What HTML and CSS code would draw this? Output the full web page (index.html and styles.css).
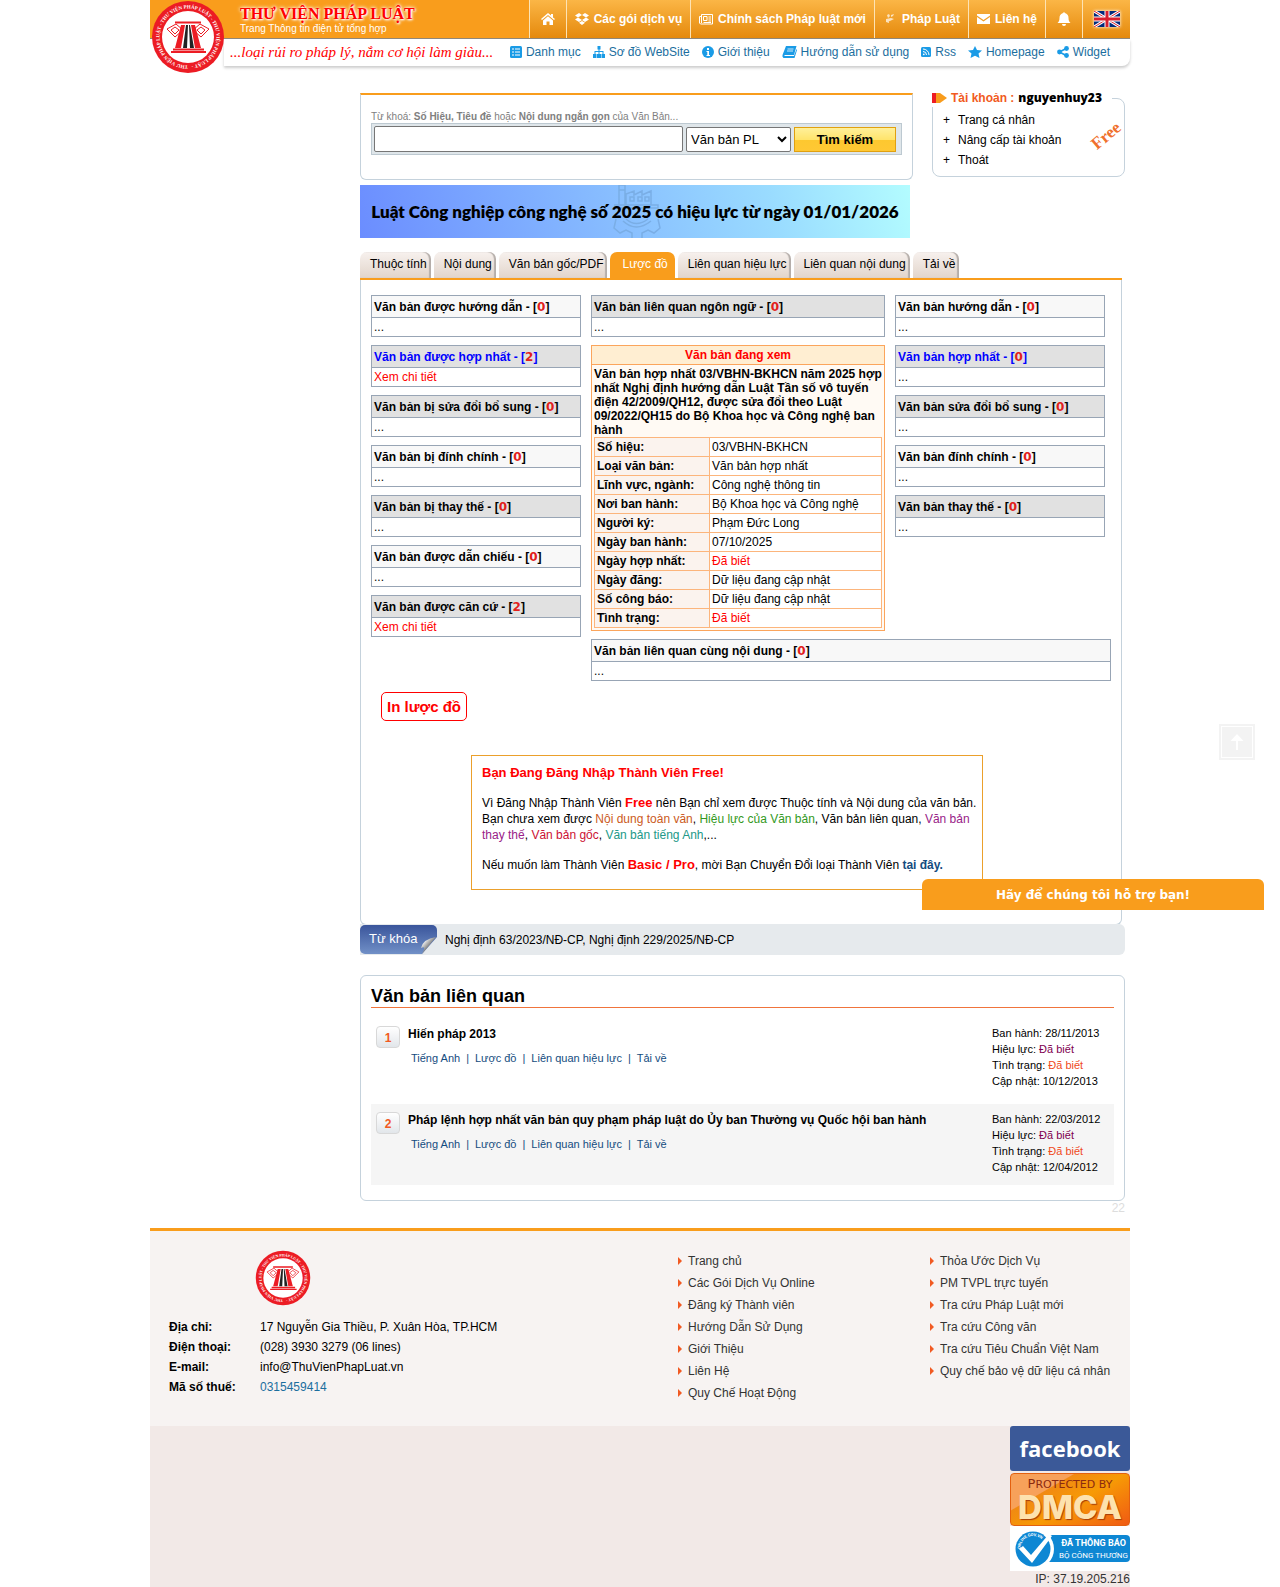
FILE: index.html
```html
<!DOCTYPE html>
<html lang="vi">
<head>
<meta charset="utf-8">
<meta name="viewport" content="width=device-width, initial-scale=1">
<title>Lược đồ - Thư Viện Pháp Luật</title>
<link rel="stylesheet" href="styles.css">
</head>
<body>
<svg class="sprite" aria-hidden="true">
  <defs>
    <path id="ring" d="M37 65.5A28.500 28.500 0 1 1 37.100 65.500"/>
    <symbol id="logo" viewBox="0 0 74 74">
      <circle cx="37" cy="37" r="36" fill="#ec1c24"/>
      <circle cx="37" cy="37" r="26" fill="#fff"/>
      <text class="ring-text"><textPath href="#ring">THƯ VIỆN PHÁP LUẬT - THƯ VIỆN PHÁP LUẬT - THƯ VIỆN PHÁP LUẬT -</textPath></text>
      <path d="M20 52h35M22 49.500h31M24 22.500h26" stroke="#ec1c24" stroke-width="1.800"/>
      <path d="M30 25h4l-4 23h-6zM40 25h4l6 23h-6z" fill="#ec1c24"/>
      <path d="M35 25h2l-1 23h-4zM38 25h1l4 23h-4z" fill="#222"/>
      <path d="M25 24l7 6-8 7-8-8zM49 24l-7 6 8 7 8-8zM24 27l4 3-4 4-4-4zM50 27l-4 3 4 4 4-4z" fill="none" stroke="#ec1c24"/>
    </symbol>
  </defs>
</svg>

<div class="page">
  <header class="header">
    <a class="logo" href="#" aria-label="Thư Viện Pháp Luật"><svg width="74" height="74"><use href="#logo"/></svg></a>
    <div class="topbar">
      <div class="brand">
        <strong class="brand-name">THƯ VIỆN PHÁP LUẬT</strong>
        <span class="brand-sub">Trang Thông tin điện tử tổng hợp</span>
      </div>
      <nav class="topnav">
        <a class="n-icon" href="#" aria-label="Trang chủ"><svg width="14" height="12" viewBox="0 0 14 12"><path d="M7 0l3 2.600V1h2v3.400L14 6l-1 1-6-5-6 5-1-1zM7 3.200l5 4.200V12H8.500V8.500h-3V12H2V7.400z"/></svg></a>
        <a class="n-services" href="#"><svg width="14" height="12" viewBox="0 0 14 12"><path d="M4 0l3 2-4 2.500L0 2.500zM10 0L7 2l4 2.500 3-2zM0 6.500l3-2L7 7 4 9zM14 6.500l-3-2L7 7l3 2zM4 9.800L7 8l3 1.800L7 12z"/></svg>Các gói dịch vụ</a>
        <a class="n-policy" href="#"><svg width="14" height="11" viewBox="0 0 14 11"><path d="M2.500.5h11v9.500h-12L.5 9V2.500h2zM2.500 2v7M4.500 2.500h3.500v4H4.500zM9.500 3H12M9.500 5H12M9.500 7H12M4.500 8.500H12" fill="none" stroke="#fff"/></svg>Chính sách Pháp luật mới</a>
        <a class="n-law" href="#"><svg width="14" height="12" viewBox="0 0 14 12"><path opacity=".7" d="M4 2l2-1 1 2-2 2zM8 2l3-1-1 2-2 1zM3 6l5-1 3 1-4 2-4 1zM3 9l3-1v2z"/></svg>Pháp Luật</a>
        <a class="n-contact" href="#"><svg width="13" height="10" viewBox="0 0 13 10"><path d="M0 0h13v1.500L6.500 6 0 1.500zM0 3l6.500 4.500L13 3v7H0z"/></svg>Liên hệ</a>
        <a class="n-icon" href="#" aria-label="Thông báo"><svg width="14" height="14" viewBox="0 0 14 14"><path d="M7 0l1 1c3 1 3.500 3 3.500 5 0 3 1 4 2 5H.5c1-1 2-2 2-5 0-2 .5-4 3.500-5zM5 12h4a2 2 0 0 1-4 0"/></svg></a>
        <a class="n-lang" href="#" aria-label="English"><svg width="26" height="16" viewBox="0 0 26 16"><path fill="#012a7c" d="M0 0h26v16H0z"/><path d="M0 0l26 16M26 0L0 16" stroke="#fff" stroke-width="3"/><path d="M0 0l26 16M26 0L0 16" stroke="#d8202e"/><path d="M13 0v16M0 8h26" stroke="#fff" stroke-width="5"/><path d="M13 0v16M0 8h26" stroke="#d8202e" stroke-width="3"/></svg></a>
      </nav>
    </div>
    <div class="subbar">
      <em class="slogan">...loại rủi ro pháp lý, nắm cơ hội làm giàu...</em>
      <nav class="subnav">
        <a href="#"><svg width="12" height="12" viewBox="0 0 12 12"><rect width="12" height="12" rx="1.500"/><path d="M2 3h2M5 3h5M2 6h2M5 6h5M2 9h2M5 9h5" stroke="#fff"/></svg>Danh mục</a>
        <a href="#"><svg width="12" height="12" viewBox="0 0 12 12"><path d="M4.500 0h3v3.500h-1V5h4v3H12v4H8.500V8h1V6h-3v2H8v4H4V8h1.500V6h-3v2h1v4H0V8h1.500V5h4V3.500h-1z"/></svg>Sơ đồ WebSite</a>
        <a href="#"><svg width="12" height="12" viewBox="0 0 12 12"><circle cx="6" cy="6" r="6"/><path d="M5 2h2v2H5zM4.500 5H7v4h1v1H4.500V9h.8V6h-.8z" fill="#fff"/></svg>Giới thiệu</a>
        <a href="#"><svg width="15" height="12" viewBox="0 0 15 12"><path d="M4 0h10.500L12 9H2.500v1H12l2.500-7 .5 1-2.500 8H1.500Q0 11 .5 9z"/><path d="M5.500 3h6M5 5h6" stroke="#fff" stroke-width=".8"/></svg>Hướng dẫn sử dụng</a>
        <a href="#"><svg width="10" height="10" viewBox="0 0 10 10"><rect width="10" height="10" rx="1.500"/><path d="M2 4.500a3.500 3.500 0 0 1 3.500 3.500M2 2a6 6 0 0 1 6 6" fill="none" stroke="#fff"/><circle cx="2.800" cy="7.300" r=".9" fill="#fff"/></svg>Rss</a>
        <a href="#"><svg width="14" height="12" viewBox="0 0 14 12"><path d="M7 0l2 4 5 .5-3.500 3 1 4.500L7 9.700 2.500 12l1-4.500L0 4.500 5 4z"/></svg>Homepage</a>
        <a href="#"><svg width="12" height="12" viewBox="0 0 12 12"><path d="M9.500 2.300L2.500 6l7 3.700" fill="none" stroke="#1a9be6" stroke-width="1.600"/><circle cx="9.500" cy="2.500" r="2.400"/><circle cx="2.500" cy="6" r="2.400"/><circle cx="9.500" cy="9.500" r="2.400"/></svg>Widget</a>
      </nav>
    </div>
  </header>

  <main class="content">
    <div class="toprow">
      <form class="search">
        <label class="hint" for="q">Từ khoá: <b>Số Hiệu, Tiêu đề</b> hoặc <b>Nội dung ngắn gọn</b> của Văn Bản...</label>
        <div class="searchbar">
          <input id="q" type="text">
          <select aria-label="Loại tìm kiếm"><option>Văn bản PL</option></select>
          <button type="button">Tìm kiếm</button>
        </div>
      </form>
      <section class="account">
        <h2><svg width="15" height="10" viewBox="0 0 15 10"><path fill="#ed1c24" d="M0 0h4v10H0z"/><path fill="#f89c1c" d="M4 0h4l7 5-7 5H4z"/></svg>Tài khoản : <b>nguyenhuy23</b></h2>
        <ul>
          <li><a href="#">Trang cá nhân</a></li>
          <li><a href="#">Nâng cấp tài khoản</a></li>
          <li><a href="#">Thoát</a></li>
        </ul>
        <span class="free">Free</span>
      </section>
    </div>

    <a class="banner" href="#">
      <svg class="gear" width="48" height="53" viewBox="0 0 48 53"><path d="M6 20V0h6v20M6 5h6M13 20V9l8-3v4l8-4v4l9-4v14M17 12h4v4h-4zM25 12h4v4h-4zM32 12h4v4h-4zM1 20h44v3H1M13 34q10 9 22 0M10 36q13 12 28 0M3 34l-2 9 6 5 6-3 6 3v5M45 34l2 9-6 5-6-3-6 3v5"/></svg>
      <span>Luật Công nghiệp công nghệ số 2025 có hiệu lực từ ngày 01/01/2026</span>
    </a>

    <nav class="tabs">
      <a href="#">Thuộc tính</a><a href="#">Nội dung</a><a href="#">Văn bản gốc/PDF</a><a class="active" href="#">Lược đồ</a><a href="#">Liên quan hiệu lực</a><a href="#">Liên quan nội dung</a><a href="#">Tải về</a>
    </nav>

    <section class="panel">
      <div class="diagram">
        <div class="col side">
          <div class="box"><h3>Văn bản được hướng dẫn - [<i>0</i>]</h3><p>...</p></div>
          <div class="box dark blue"><h3>Văn bản được hợp nhất - [<i>2</i>]</h3><p><a href="#">Xem chi tiết</a></p></div>
          <div class="box dark"><h3>Văn bản bị sửa đổi bổ sung - [<i>0</i>]</h3><p>...</p></div>
          <div class="box"><h3>Văn bản bị đính chính - [<i>0</i>]</h3><p>...</p></div>
          <div class="box dark"><h3>Văn bản bị thay thế - [<i>0</i>]</h3><p>...</p></div>
          <div class="box"><h3>Văn bản được dẫn chiếu - [<i>0</i>]</h3><p>...</p></div>
          <div class="box dark"><h3>Văn bản được căn cứ - [<i>2</i>]</h3><p><a href="#">Xem chi tiết</a></p></div>
        </div>
        <div class="wide">
          <div class="pair">
            <div class="col middle">
              <div class="box dark"><h3>Văn bản liên quan ngôn ngữ - [<i>0</i>]</h3><p>...</p></div>
              <div class="current">
                <h3>Văn bản đang xem</h3>
                <p>Văn bản hợp nhất 03/VBHN-BKHCN năm 2025 hợp nhất Nghị định hướng dẫn Luật Tần số vô tuyến điện 42/2009/QH12, được sửa đổi theo Luật 09/2022/QH15 do Bộ Khoa học và Công nghệ ban hành</p>
                <table>
                  <tr><th scope="row">Số hiệu:</th><td>03/VBHN-BKHCN</td></tr>
                  <tr><th scope="row">Loại văn bản:</th><td>Văn bản hợp nhất</td></tr>
                  <tr><th scope="row">Lĩnh vực, ngành:</th><td>Công nghệ thông tin</td></tr>
                  <tr><th scope="row">Nơi ban hành:</th><td>Bộ Khoa học và Công nghệ</td></tr>
                  <tr><th scope="row">Người ký:</th><td>Phạm Đức Long</td></tr>
                  <tr><th scope="row">Ngày ban hành:</th><td>07/10/2025</td></tr>
                  <tr><th scope="row">Ngày hợp nhất:</th><td class="red">Đã biết</td></tr>
                  <tr><th scope="row">Ngày đăng:</th><td>Dữ liệu đang cập nhật</td></tr>
                  <tr><th scope="row">Số công báo:</th><td>Dữ liệu đang cập nhật</td></tr>
                  <tr><th scope="row">Tình trạng:</th><td class="red">Đã biết</td></tr>
                </table>
              </div>
            </div>
            <div class="col side">
              <div class="box"><h3>Văn bản hướng dẫn - [<i>0</i>]</h3><p>...</p></div>
              <div class="box dark blue"><h3>Văn bản hợp nhất - [<i>0</i>]</h3><p>...</p></div>
              <div class="box dark"><h3>Văn bản sửa đổi bổ sung - [<i>0</i>]</h3><p>...</p></div>
              <div class="box"><h3>Văn bản đính chính - [<i>0</i>]</h3><p>...</p></div>
              <div class="box dark"><h3>Văn bản thay thế - [<i>0</i>]</h3><p>...</p></div>
            </div>
          </div>
          <div class="box"><h3>Văn bản liên quan cùng nội dung - [<i>0</i>]</h3><p>...</p></div>
        </div>
      </div>
      <button class="print" type="button">In lược đồ</button>
      <div class="notice">
        <h3>Bạn Đang Đăng Nhập Thành Viên Free!</h3>
        <p>Vì Đăng Nhập Thành Viên <b>Free</b> nên Bạn chỉ xem được Thuộc tính và Nội dung của văn bản. Bạn chưa xem được <span class="c1">Nội dung toàn văn</span>, <span class="c2">Hiệu lực của Văn bản</span>, Văn bản liên quan, <span class="c3">Văn bản thay thế</span>, <span class="c4">Văn bản gốc</span>, <span class="c5">Văn bản tiếng Anh</span>,...</p>
        <p>Nếu muốn làm Thành Viên <b>Basic / Pro</b>, mời Bạn Chuyển Đổi loại Thành Viên <a href="#">tại đây.</a></p>
      </div>
    </section>

    <div class="keywords">
      <span class="key-label">Từ khóa<svg width="17" height="17" viewBox="0 0 17 17"><defs><linearGradient id="fold" x2="1" y2="1"><stop offset=".2" stop-color="#fff"/><stop offset=".6" stop-color="#666"/></linearGradient></defs><path fill="#e6eaed" d="M17 0v17H2z"/><path fill="url(#fold)" d="M16 0Q3 2 1 11q6-3 1 6z"/></svg></span>
      <span><a href="#">Nghị định 63/2023/NĐ-CP</a>, <a href="#">Nghị định 229/2025/NĐ-CP</a></span>
    </div>

    <section class="related">
      <h2>Văn bản liên quan</h2>
      <article>
        <span class="num">1</span>
        <div class="doc">
          <h3><a href="#">Hiến pháp 2013</a></h3>
          <p><a href="#">Tiếng Anh</a><span>|</span><a href="#">Lược đồ</a><span>|</span><a href="#">Liên quan hiệu lực</a><span>|</span><a href="#">Tải về</a></p>
        </div>
        <div class="meta"><div>Ban hành: 28/11/2013</div><div>Hiệu lực: <span class="valid">Đã biết</span></div><div>Tình trạng: <span class="state">Đã biết</span></div><div>Cập nhật: 10/12/2013</div></div>
      </article>
      <article>
        <span class="num">2</span>
        <div class="doc">
          <h3><a href="#">Pháp lệnh hợp nhất văn bản quy phạm pháp luật do Ủy ban Thường vụ Quốc hội ban hành</a></h3>
          <p><a href="#">Tiếng Anh</a><span>|</span><a href="#">Lược đồ</a><span>|</span><a href="#">Liên quan hiệu lực</a><span>|</span><a href="#">Tải về</a></p>
        </div>
        <div class="meta"><div>Ban hành: 22/03/2012</div><div>Hiệu lực: <span class="valid">Đã biết</span></div><div>Tình trạng: <span class="state">Đã biết</span></div><div>Cập nhật: 12/04/2012</div></div>
      </article>
    </section>
    <div class="counter">22</div>
  </main>

  <footer class="footer">
    <div class="foot-main">
      <div class="contact">
        <svg width="56" height="56"><use href="#logo"/></svg>
        <dl>
          <dt>Địa chỉ:</dt><dd>17 Nguyễn Gia Thiều, P. Xuân Hòa, TP.HCM</dd>
          <dt>Điện thoại:</dt><dd>(028) 3930 3279 (06 lines)</dd>
          <dt>E-mail:</dt><dd>info@ThuVienPhapLuat.vn</dd>
          <dt>Mã số thuế:</dt><dd><a href="#">0315459414</a></dd>
        </dl>
      </div>
      <ul>
        <li><a href="#">Trang chủ</a></li><li><a href="#">Các Gói Dịch Vụ Online</a></li><li><a href="#">Đăng ký Thành viên</a></li><li><a href="#">Hướng Dẫn Sử Dụng</a></li><li><a href="#">Giới Thiệu</a></li><li><a href="#">Liên Hệ</a></li><li><a href="#">Quy Chế Hoạt Động</a></li>
      </ul>
      <ul>
        <li><a href="#">Thỏa Ước Dịch Vụ</a></li><li><a href="#">PM TVPL trực tuyến</a></li><li><a href="#">Tra cứu Pháp Luật mới</a></li><li><a href="#">Tra cứu Công văn</a></li><li><a href="#">Tra cứu Tiêu Chuẩn Việt Nam</a></li><li><a href="#">Quy chế bảo vệ dữ liệu cá nhân</a></li>
      </ul>
    </div>
    <div class="badges">
      <a class="facebook" href="#">facebook</a>
      <a class="dmca" href="#"><small>P<span>ROTECTED BY</span></small><strong>DMCA</strong></a>
      <a class="bct" href="#">
        <svg width="42" height="40" viewBox="0 0 42 40"><circle cx="19" cy="20" r="20" fill="#fff"/><circle cx="18" cy="20" r="17.500" fill="#0e87d3"/><path id="arc" d="M5.500 20A12.500 12.500 0 0 1 30 16" fill="none"/><text class="arc-text"><textPath href="#arc">ONLINE.GOV.VN</textPath></text><path d="M4 20l4-3 8 9L34 5l3 2-20 27z" fill="#fff"/></svg>
        <span><b>ĐÃ THÔNG BÁO</b>BỘ CÔNG THƯƠNG</span>
      </a>
      <span>IP: 37.19.205.216</span>
    </div>
  </footer>
</div>

<button class="to-top" type="button" aria-label="Lên đầu trang"><svg width="14" height="16" viewBox="0 0 14 16"><path fill="#fff" d="M7 0l6.500 7H8v9H6V7H.5z"/></svg></button>
<button class="support" type="button">Hãy để chúng tôi hỗ trợ bạn!</button>
</body>
</html>
```

FILE: styles.css
```css
* { box-sizing: border-box; }
body { margin: 0; position: relative; background: #fff; color: #000; font: 12px/16px "Liberation Sans", Arial, sans-serif; }
a { color: inherit; text-decoration: none; }
h2, h3, p, ul, dl, dd { margin: 0; padding: 0; }
h3 { font-size: 12px; }
ul { list-style: none; }
button, input, select { font-family: inherit; color: #000; }
.sprite { position: absolute; width: 0; height: 0; }
.ring-text { font: bold 5px "Liberation Serif", serif; fill: #fff; }
.page { max-width: 980px; margin: 0 auto; }

/* Header */
.header { position: relative; }
.logo { position: absolute; left: 1px; top: 0; z-index: 1; }
.logo svg { display: block; }
.topbar { display: flex; height: 39px; background: #f99d1c; border-bottom: 1px solid #8f8578; }
.brand { flex: 1; display: flex; flex-direction: column; padding: 5px 0 0 90px; }
.brand-name { font: bold 16px/18px "Liberation Serif", serif; color: #f00; text-shadow: 0 0 3px #fff, 0 0 4px #fff, 1px 1px 2px #fff; }
.brand-sub { font-size: 10px; line-height: 12px; color: #fff; }
.topnav { display: flex; color: #fff; fill: #fff; font-weight: bold; }
.topnav a { display: flex; align-items: center; justify-content: center; gap: 5px; border-left: 1px solid #fde3b4; background: linear-gradient(#fbb646, #e5890c); }
.n-icon { width: 37px; }
.n-services { width: 124px; }
.n-policy { width: 184px; }
.n-law { width: 94px; }
.n-contact { width: 77px; }
.n-lang { width: 48px; }
.n-lang svg { box-shadow: 0 0 3px #fff; }
.subbar { display: flex; align-items: center; justify-content: space-between; height: 27px; margin-left: 74px; padding: 0 20px 2px 6px; border-radius: 0 0 8px 0; box-shadow: 0 2px 3px #ccc; }
.slogan { font: italic 15px/20px "Liberation Serif", serif; color: #f00; }
.subnav { display: flex; gap: 12px; color: #1b6e9e; fill: #1a9be6; }
.subnav a { display: flex; align-items: center; gap: 4px; }

/* Search and account */
.content { padding: 27px 5px 0 210px; }
.toprow { display: flex; align-items: flex-start; justify-content: space-between; }
.search { width: 553px; height: 87px; padding: 15px 10px 0; border: 1px solid #c5d2dc; border-top: 2px solid #f99d1c; border-radius: 0 0 6px 6px; }
.hint { display: block; font-size: 10px; line-height: 13px; color: #808080; }
.searchbar { display: flex; align-items: center; gap: 3px; height: 32px; padding: 0 5px 0 2px; border: 1px solid #bdc9d1; background: #dfe6ea; }
.searchbar input { flex: 1; min-width: 0; height: 26px; border: 1px solid #767676; border-radius: 2px; background: #fff; }
.searchbar select { width: 105px; height: 25px; padding: 0; border: 1px solid #767676; border-radius: 2px; background: #fff; font-size: 13px; }
.searchbar button { width: 102px; height: 25px; padding: 0; border: 1px solid #e0a010; background: linear-gradient(#fff09a, #ffe46c 50%, #fdc82f 51%, #ffc834); font-size: 13px; font-weight: bold; }
.account { position: relative; width: 193px; height: 79px; margin-top: 5px; border: 1px solid #c5d2dc; border-radius: 8px; }
.account h2 { display: flex; align-items: center; gap: 4px; width: 180px; height: 18px; margin: -10px 0 0 -1px; background: #fff; color: #f15a22; font-size: 12px; }
.account h2 b { color: #000; font: 800 12px/16px "Open Sans", sans-serif; }
.account ul { padding-left: 10px; line-height: 20px; margin-top: 3px; }
.account li::before { content: "+"; display: inline-block; width: 15px; }
.free { position: absolute; right: 1px; top: 26px; transform: rotate(-40deg); color: #f0702c; font: bold 17px/22px "Liberation Serif", serif; }

/* Banner */
.banner { position: relative; display: flex; align-items: center; justify-content: center; width: 550px; height: 53px; margin-top: 5px; background: linear-gradient(75deg, #6b8dff, #9adcff 75%, #b3fcff); font: 800 17px/20px Lato, sans-serif; }
.banner span { position: relative; white-space: nowrap; }
.gear { position: absolute; left: 253px; top: 0; fill: none; stroke: #7aaee6; stroke-width: 1.5; }

/* Tabs and diagram */
.tabs { display: flex; gap: 3px; margin: 14px 3px 0 0; height: 28px; border-bottom: 2px solid #f99d1c; line-height: 24px; }
.tabs a { padding: 0 4px 0 10px; border-radius: 7px 7px 0 0; background: linear-gradient(#f7f1ee, #e2d5cb); box-shadow: inset -2px 0 1px #b5aeaa; white-space: nowrap; }
.tabs .active { padding: 0 7px 0 12px; background: #f99d1c; box-shadow: none; color: #fff; }
.panel { margin-right: 3px; padding: 15px 10px 34px; border: 1px solid #c5d2dc; border-top: 0; border-radius: 0 0 6px 6px; }
.diagram { display: flex; gap: 10px; }
.col { display: flex; flex-direction: column; gap: 8px; }
.side { width: 210px; }
.middle { width: 294px; }
.pair { display: flex; gap: 10px; }
.wide { flex: 1; display: flex; flex-direction: column; gap: 8px; }
.box { border: 1px solid #98a5b5; }
.box h3 { height: 21px; padding-left: 2px; line-height: 22px; background: #f8f8f8; }
.box p { height: 19px; padding-left: 2px; border-top: 1px solid #98a5b5; line-height: 18px; }
.box p a, .red { color: #f00; }
.dark h3 { background: #e1e1e1; }
.blue h3 { color: #00f; }
.box i { color: #e2211c; font: bold 12px/16px "DejaVu Sans", sans-serif; }
.current { border: 1px solid #fba55c; background: #fffaf4; padding-bottom: 2px; }
.current h3 { height: 19px; border-bottom: 1px solid #fba55c; background: #ffeed2; color: #f00; text-align: center; line-height: 18px; }
.current p { padding: 2px 0 0 2px; font-weight: bold; line-height: 14px; }
.current table { width: 288px; margin-left: 2px; border-collapse: collapse; background: #fff; }
.current th, .current td { height: 19px; padding: 0 2px; border: 1px solid #fcb57c; line-height: 16px; text-align: left; }
.current th { width: 115px; background: #fbf3ee; }
.print { display: block; width: 86px; height: 29px; margin: 11px 0 0 10px; padding: 0; border: 1px solid #f00; border-radius: 5px; background: #fff; color: #f00; font-size: 15px; font-weight: bold; }
.notice { width: 512px; height: 135px; margin: 34px 0 0 100px; padding: 9px 0 0 10px; border: 1px solid #eba02c; display: flex; flex-direction: column; gap: 14px; }
.notice h3, .notice b { color: #f00; font-size: 13px; }
.notice a { color: #144c80; font-weight: bold; }
.c1 { color: #cb5a22; }
.c2 { color: #339922; }
.c3 { color: #992288; }
.c4 { color: #cc1133; }
.c5 { color: #229988; }

/* Keywords */
.keywords { display: flex; align-items: center; gap: 8px; height: 31px; margin-top: -1px; border-radius: 0 6px 6px 0; background: #e6eaed; }
.key-label { position: relative; width: 77px; height: 29px; padding-left: 9px; border-radius: 5px; background: linear-gradient(#3a559b, #7190c7); color: #fff; font-size: 13px; line-height: 28px; }
.key-label svg { position: absolute; right: 0; bottom: 0; }

/* Related documents */
.related { margin-top: 20px; padding: 10px 10px 15px; border: 1px solid #c5d2dc; border-radius: 6px; }
.related h2 { height: 22px; margin-bottom: 10px; border-bottom: 1px solid #f0743c; font-size: 18px; line-height: 20px; }
.related article { display: flex; height: 81px; padding: 8px 0 0 5px; }
.related article + article { margin-top: 5px; background: #f5f5f5; }
.num { width: 24px; height: 22px; border: 1px solid #d8d8d8; border-radius: 4px; background: linear-gradient(#fff, #e2e6ea); color: #f15a22; font-weight: bold; line-height: 22px; text-align: center; }
.doc { flex: 1; padding-left: 8px; }
.doc p { display: flex; gap: 6px; padding: 8px 0 0 3px; font-size: 11px; color: #144c80; }
.meta { width: 122px; font-size: 11px; margin-top: -1px; }
.valid { color: #800050; }
.state { color: #f04a1c; }
.counter { height: 27px; text-align: right; color: #ddd; line-height: 14px; }

/* Footer */
.footer { border-top: 3px solid #f99d1c; background: #f2e9e7; }
.foot-main { display: flex; min-height: 195px; padding-top: 19px; background: #f7f3f2; }
.contact { width: 528px; padding-left: 19px; }
.contact svg { display: block; margin-left: 86px; }
.contact dl { display: grid; grid-template-columns: 91px 1fr; margin-top: 11px; line-height: 20px; }
.contact dt { font-weight: bold; }
.contact dd a { color: #1b6e9e; }
.foot-main ul { width: 252px; color: #333; line-height: 22px; white-space: nowrap; }
.foot-main ul + ul { width: auto; }
.foot-main li { display: flex; align-items: center; gap: 6px; }
.foot-main li::before { content: ""; border: 4px solid transparent; border-left-color: #f15a22; border-right-width: 0; }
.badges { display: flex; flex-direction: column; align-items: flex-end; color: #333; }
.badges a { width: 120px; }
.facebook { height: 45px; border-radius: 3px; background: #3b5998; color: #fff; font: bold 22px/45px "Open Sans", sans-serif; text-align: center; }
.dmca { display: flex; flex-direction: column; align-items: center; height: 53px; margin-top: 2px; padding-top: 4px; border: 1px solid #e3600f; border-radius: 4px; background: linear-gradient(150deg, #f7a15a 30%, #f18a12 31%, #f79a05 55%, #f05a14); }
.dmca small { color: #8c2a10; font: 13px/12px "DejaVu Sans", sans-serif; white-space: nowrap; }
.dmca small span { font-size: 11px; }
.dmca strong { color: #fde2ae; font: 800 33px/32px "Inter", sans-serif; text-shadow: 1px 1px 1px #a63c08; }
.bct { position: relative; display: flex; align-items: center; height: 45px; background: #fff; }
.bct::before { content: ""; position: absolute; inset: 9px 0 9px 30px; border-radius: 4px; background: #0e87d3; }
.bct svg { position: relative; margin-left: 5px; }
.bct span { position: relative; flex: 1; color: #fff; font: 8px/11px Roboto, sans-serif; text-align: center; white-space: nowrap; }
.bct b { display: block; font-size: 9px; line-height: 13px; }
.arc-text { font: bold 4px Roboto, sans-serif; fill: #fff; }

/* Floating controls */
.to-top { position: absolute; right: 25px; top: 724px; width: 36px; height: 36px; padding: 0; border: 2px solid #f3f3f3; background: #f3f3f3; box-shadow: inset 0 0 0 1px #fff; display: grid; place-items: center; }
.support { position: absolute; right: 16px; top: 879px; width: 342px; height: 31px; padding: 0; border: 0; border-radius: 6px 6px 0 0; background: #f99d1c; color: #fff; font: bold 12px/16px "DejaVu Sans", sans-serif; }
```
